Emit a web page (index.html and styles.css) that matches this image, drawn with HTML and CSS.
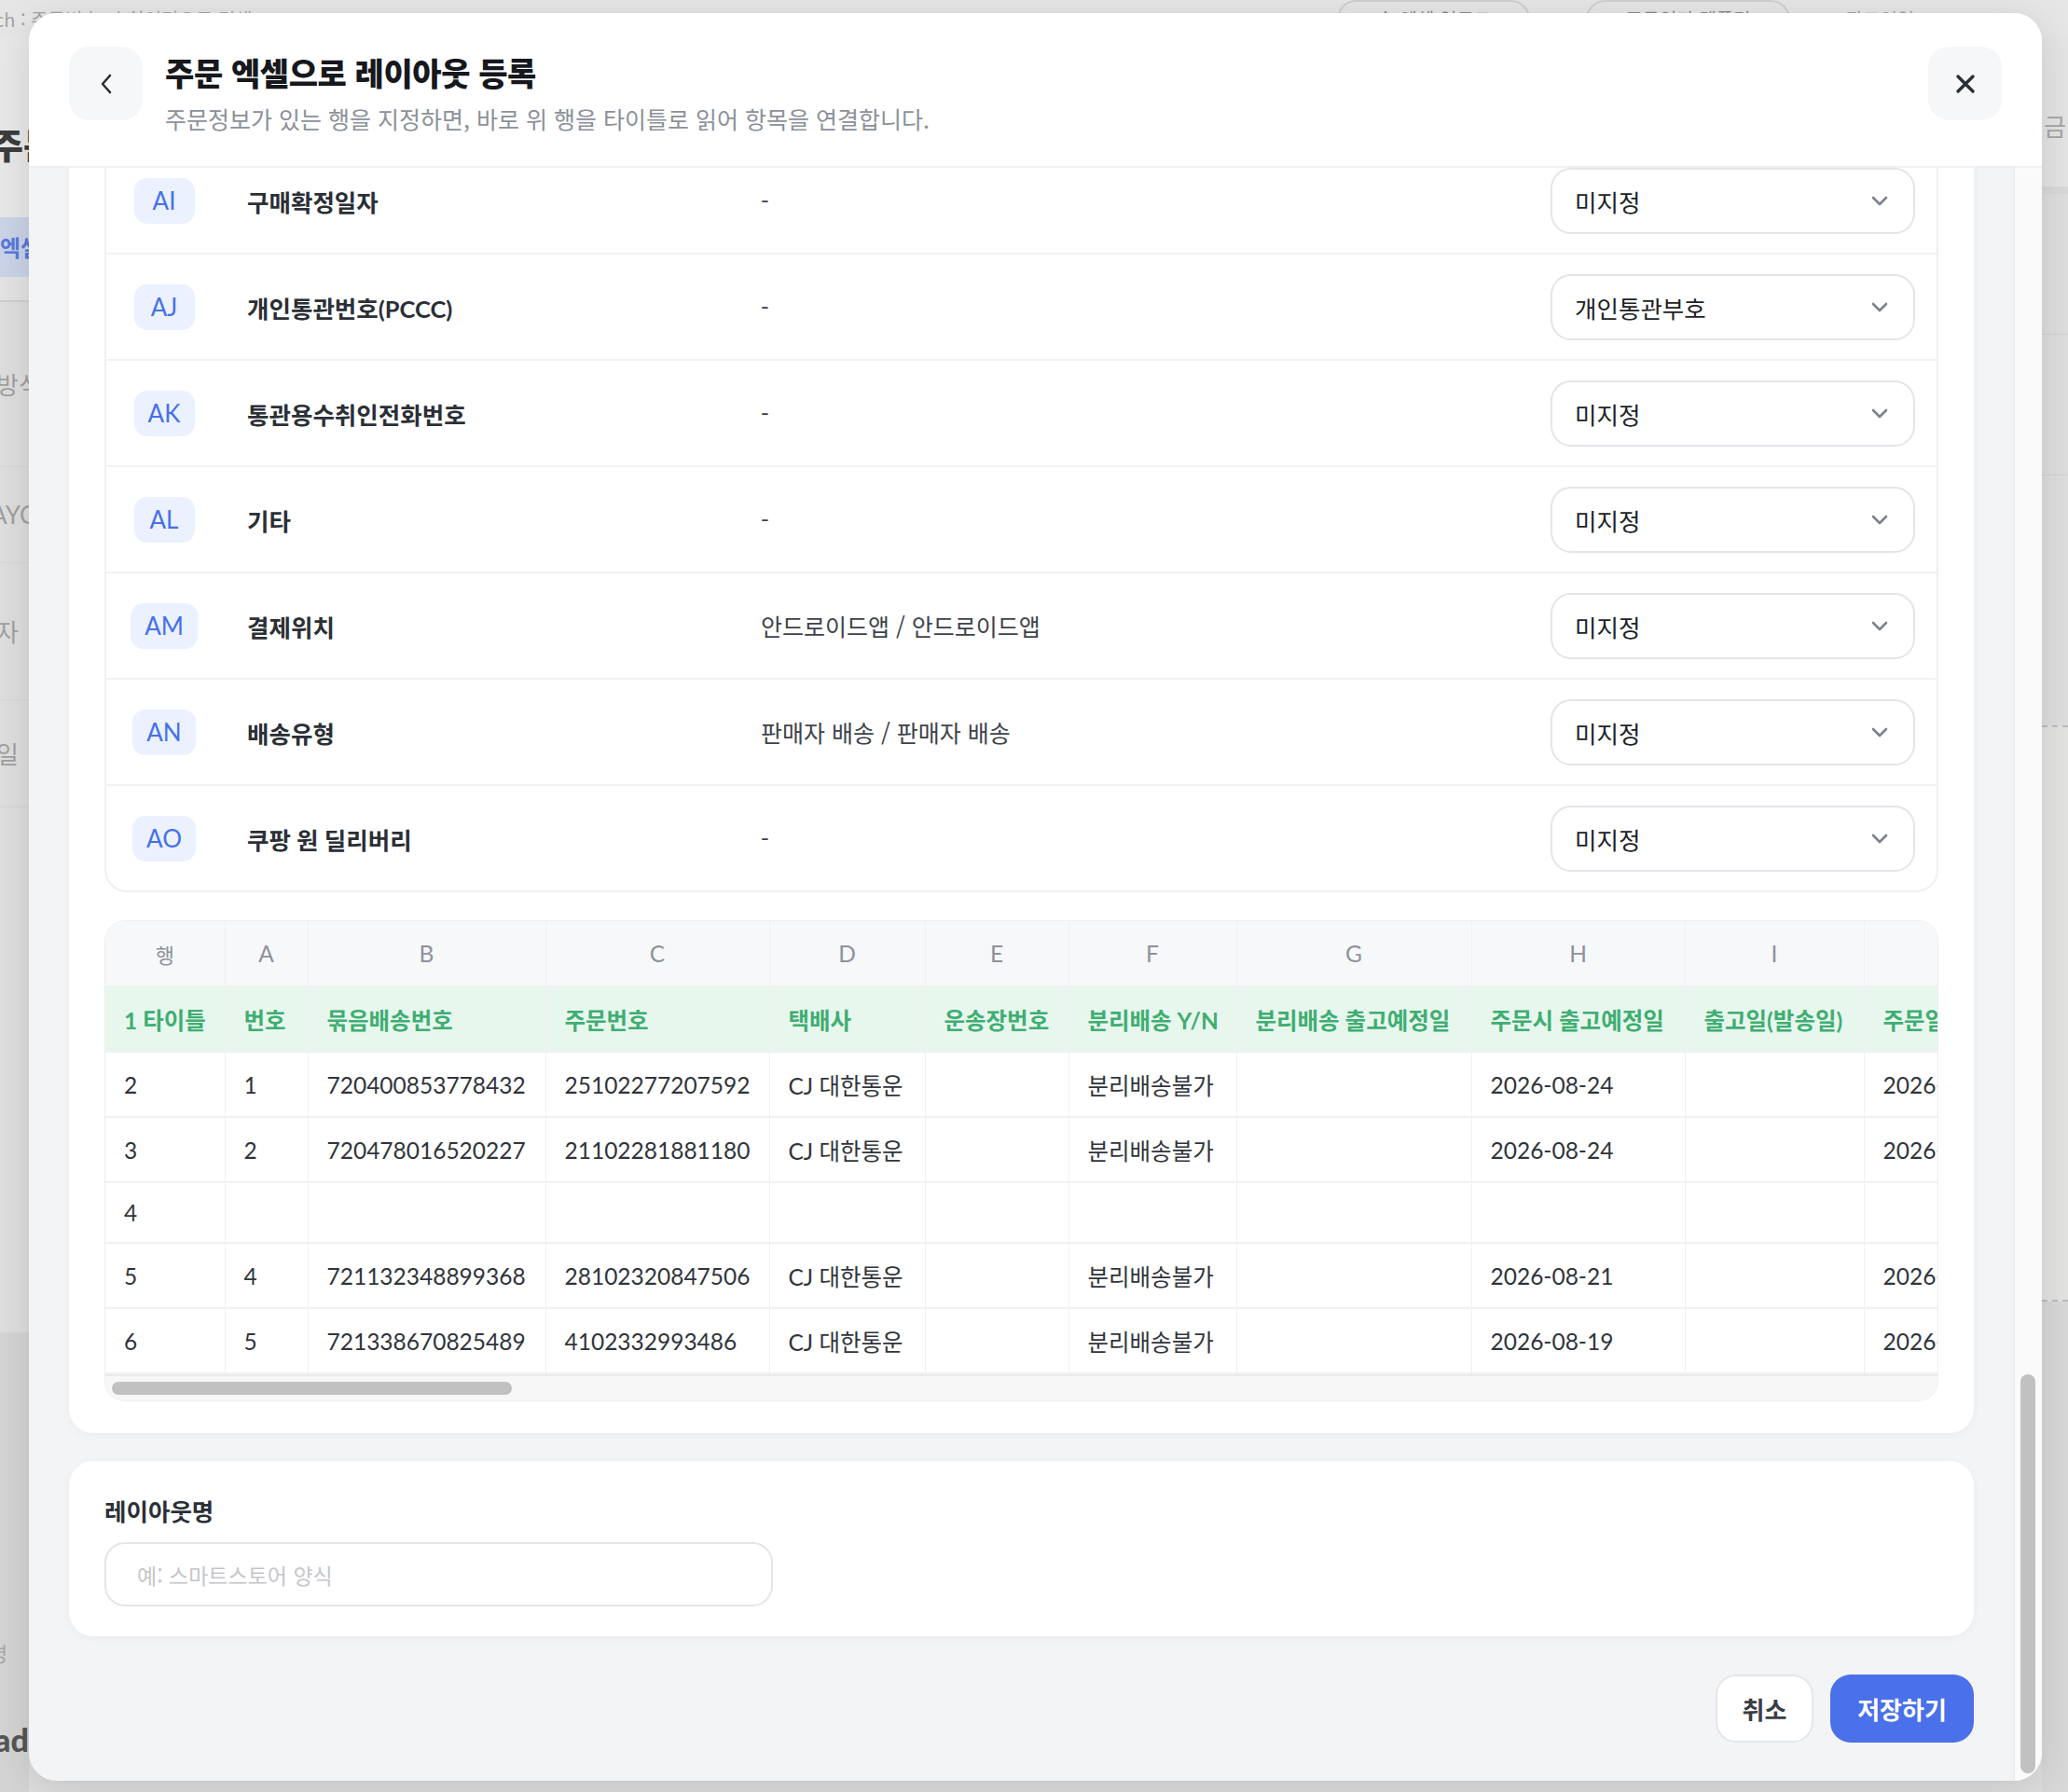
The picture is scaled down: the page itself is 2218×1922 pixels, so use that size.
FILE: index.html
```html
<!DOCTYPE html>
<html lang="ko">
<head>
  <meta charset="UTF-8">
  <meta name="viewport" content="width=device-width, initial-scale=1.0">
  <title>주문 엑셀으로 레이아웃 등록</title>
  <link rel="stylesheet" href="styles.css">
</head>
<body>
  <div class="page">
    <!-- dimmed page behind the dialog -->
    <div class="page-top">
      <span class="page-search">ch : 주문번호, 수취인명으로 검색</span>
      <span class="page-pill">↑ 엑셀 업로드</span>
      <span class="page-pill">주문일자 템플릿</span>
      <span class="page-link">광고인입</span>
    </div>
    <div class="page-body">
      <div class="page-left">
        <div class="pl-head">주문</div>
        <div class="pl-tab">엑셀</div>
        <div class="pl-sep"></div>
        <div class="pl-row r1">방식</div>
        <div class="pl-row r2">AYC</div>
        <div class="pl-row r3">자</div>
        <div class="pl-row r4">일</div>
        <div class="pl-fill"></div>
        <div class="pl-dark">
          <div class="pl-name">명</div>
          <div class="pl-brand">ad</div>
        </div>
      </div>
      <div class="page-right">
        <div class="pr-head">금</div>
        <div class="pr-row"></div>
        <div class="pr-row"></div>
        <div class="pr-dash"></div>
        <div class="pr-rest"></div>
      </div>
    </div>

    <div class="modal">
      <header class="modal-head">
        <button class="icon-btn" aria-label="뒤로">
          <svg width="14" height="24" viewBox="0 0 14 24"><path d="M11 3L3 12l8 9" fill="none" stroke="#2b2f36" stroke-width="2.6" stroke-linecap="round" stroke-linejoin="round"/></svg>
        </button>
        <div class="head-text">
          <h1>주문 엑셀으로 레이아웃 등록</h1>
          <p>주문정보가 있는 행을 지정하면, 바로 위 행을 타이틀로 읽어 항목을 연결합니다.</p>
        </div>
        <button class="icon-btn" aria-label="닫기">
          <svg width="22" height="22" viewBox="0 0 22 22"><path d="M3 3l16 16M19 3L3 19" fill="none" stroke="#2b2f36" stroke-width="3.4" stroke-linecap="round"/></svg>
        </button>
      </header>

      <div class="modal-body">
        <div class="scroll">
          <div class="scroll-inner">
            <section class="card">
              <div class="map-list">
                <div class="map-row">
                  <div class="map-col"><span class="col-badge">AG</span></div>
                  <div class="map-label">배송메시지</div>
                  <div class="map-value">-</div>
                  <div class="select">미지정<svg class="chev" width="18" height="11" viewBox="0 0 18 11"><path d="M2 2l7 7 7-7" fill="none" stroke="#7d828b" stroke-width="2.6" stroke-linecap="round" stroke-linejoin="round"/></svg></div>
                </div>
                <div class="map-row">
                  <div class="map-col"><span class="col-badge">AH</span></div>
                  <div class="map-label">결제일</div>
                  <div class="map-value">-</div>
                  <div class="select">미지정<svg class="chev" width="18" height="11" viewBox="0 0 18 11"><path d="M2 2l7 7 7-7" fill="none" stroke="#7d828b" stroke-width="2.6" stroke-linecap="round" stroke-linejoin="round"/></svg></div>
                </div>
                <div class="map-row">
                  <div class="map-col"><span class="col-badge">AI</span></div>
                  <div class="map-label">구매확정일자</div>
                  <div class="map-value">-</div>
                  <div class="select">미지정<svg class="chev" width="18" height="11" viewBox="0 0 18 11"><path d="M2 2l7 7 7-7" fill="none" stroke="#7d828b" stroke-width="2.6" stroke-linecap="round" stroke-linejoin="round"/></svg></div>
                </div>
                <div class="map-row">
                  <div class="map-col"><span class="col-badge">AJ</span></div>
                  <div class="map-label">개인통관번호(PCCC)</div>
                  <div class="map-value">-</div>
                  <div class="select">개인통관부호<svg class="chev" width="18" height="11" viewBox="0 0 18 11"><path d="M2 2l7 7 7-7" fill="none" stroke="#7d828b" stroke-width="2.6" stroke-linecap="round" stroke-linejoin="round"/></svg></div>
                </div>
                <div class="map-row">
                  <div class="map-col"><span class="col-badge">AK</span></div>
                  <div class="map-label">통관용수취인전화번호</div>
                  <div class="map-value">-</div>
                  <div class="select">미지정<svg class="chev" width="18" height="11" viewBox="0 0 18 11"><path d="M2 2l7 7 7-7" fill="none" stroke="#7d828b" stroke-width="2.6" stroke-linecap="round" stroke-linejoin="round"/></svg></div>
                </div>
                <div class="map-row">
                  <div class="map-col"><span class="col-badge">AL</span></div>
                  <div class="map-label">기타</div>
                  <div class="map-value">-</div>
                  <div class="select">미지정<svg class="chev" width="18" height="11" viewBox="0 0 18 11"><path d="M2 2l7 7 7-7" fill="none" stroke="#7d828b" stroke-width="2.6" stroke-linecap="round" stroke-linejoin="round"/></svg></div>
                </div>
                <div class="map-row">
                  <div class="map-col"><span class="col-badge">AM</span></div>
                  <div class="map-label">결제위치</div>
                  <div class="map-value">안드로이드앱 / 안드로이드앱</div>
                  <div class="select">미지정<svg class="chev" width="18" height="11" viewBox="0 0 18 11"><path d="M2 2l7 7 7-7" fill="none" stroke="#7d828b" stroke-width="2.6" stroke-linecap="round" stroke-linejoin="round"/></svg></div>
                </div>
                <div class="map-row">
                  <div class="map-col"><span class="col-badge">AN</span></div>
                  <div class="map-label">배송유형</div>
                  <div class="map-value">판매자 배송 / 판매자 배송</div>
                  <div class="select">미지정<svg class="chev" width="18" height="11" viewBox="0 0 18 11"><path d="M2 2l7 7 7-7" fill="none" stroke="#7d828b" stroke-width="2.6" stroke-linecap="round" stroke-linejoin="round"/></svg></div>
                </div>
                <div class="map-row">
                  <div class="map-col"><span class="col-badge">AO</span></div>
                  <div class="map-label">쿠팡 원 딜리버리</div>
                  <div class="map-value">-</div>
                  <div class="select">미지정<svg class="chev" width="18" height="11" viewBox="0 0 18 11"><path d="M2 2l7 7 7-7" fill="none" stroke="#7d828b" stroke-width="2.6" stroke-linecap="round" stroke-linejoin="round"/></svg></div>
                </div>
              </div>

              <!-- sheet preview -->
              <div class="sheet">
                <div class="sheet-scroll">
                  <table class="grid">
                    <colgroup>
                      <col style="width:128px"><col style="width:89px"><col style="width:255px"><col style="width:240px">
                      <col style="width:167px"><col style="width:154px"><col style="width:180px"><col style="width:252px">
                      <col style="width:229px"><col style="width:192px"><col style="width:220px"><col style="width:200px">
                    </colgroup>
                    <thead>
                      <tr class="letters">
                        <th>행</th><th>A</th><th>B</th><th>C</th><th>D</th><th>E</th><th>F</th><th>G</th><th>H</th><th>I</th><th>J</th><th>K</th>
                      </tr>
                    </thead>
                    <tbody>
                      <tr class="titles">
                        <td>1 타이틀</td><td>번호</td><td>묶음배송번호</td><td>주문번호</td><td>택배사</td><td>운송장번호</td><td>분리배송 Y/N</td><td>분리배송 출고예정일</td><td>주문시 출고예정일</td><td>출고일(발송일)</td><td>주문일시</td><td>결제일</td>
                      </tr>
                      <tr>
                        <td>2</td><td>1</td><td>720400853778432</td><td>25102277207592</td><td>CJ 대한통운</td><td></td><td>분리배송불가</td><td></td><td>2026-08-24</td><td></td><td>2026-08-17 10:21</td><td></td>
                      </tr>
                      <tr>
                        <td>3</td><td>2</td><td>720478016520227</td><td>21102281881180</td><td>CJ 대한통운</td><td></td><td>분리배송불가</td><td></td><td>2026-08-24</td><td></td><td>2026-08-17 11:05</td><td></td>
                      </tr>
                      <tr class="empty">
                        <td>4</td><td></td><td></td><td></td><td></td><td></td><td></td><td></td><td></td><td></td><td></td><td></td>
                      </tr>
                      <tr>
                        <td>5</td><td>4</td><td>721132348899368</td><td>28102320847506</td><td>CJ 대한통운</td><td></td><td>분리배송불가</td><td></td><td>2026-08-21</td><td></td><td>2026-08-14 09:40</td><td></td>
                      </tr>
                      <tr>
                        <td>6</td><td>5</td><td>721338670825489</td><td>4102332993486</td><td>CJ 대한통운</td><td></td><td>분리배송불가</td><td></td><td>2026-08-19</td><td></td><td>2026-08-12 16:32</td><td></td>
                      </tr>
                    </tbody>
                  </table>
                </div>
                <div class="hbar"><span class="hbar-thumb"></span></div>
              </div>
            </section>

            <section class="card name-card">
              <label class="field-label" for="layoutName">레이아웃명</label>
              <input id="layoutName" class="text-input" type="text" placeholder="예: 스마트스토어 양식">
            </section>

            <div class="actions">
              <button class="btn btn-cancel">취소</button>
              <button class="btn btn-save">저장하기</button>
            </div>
          </div>
        </div>
        <div class="vbar"><span class="vbar-thumb"></span></div>
      </div>
    </div>
  </div>
</body>
</html>
```

FILE: styles.css
```css
/* Order excel layout dialog */
body {
  margin: 0;
  font-family: "Lato", "Noto Sans CJK KR", sans-serif;
  color: #2b2f36;
}

.page {
  position: relative;
  width: 2218px;
  height: 1922px;
  overflow: hidden;
  background: #dedede;
}

/* ---------- dimmed background page ---------- */
.page-top {
  height: 40px;
  display: flex;
  align-items: center;
  gap: 60px;
  background: #e6e6e6;
  font-family: "Noto Sans CJK KR", sans-serif;
  font-size: 20px;
  color: #a3a3a3;
  white-space: nowrap;
}

.page-search {
  margin-left: -6px;
  width: 1380px;
}

.page-pill {
  padding: 4px 40px;
  border: 2px solid #cfcfcf;
  border-radius: 30px;
  color: #8a8a8a;
}

.page-body {
  height: 1882px;
  display: flex;
  justify-content: space-between;
}

.page-left {
  width: 31px;
  overflow: hidden;
  white-space: nowrap;
  display: flex;
  flex-direction: column;
  font-family: "Noto Sans CJK KR", sans-serif;
}

.pl-head {
  height: 193px;
  box-sizing: border-box;
  padding-top: 92px;
  line-height: 44px;
  font-size: 38px;
  font-weight: 900;
  color: #3c3c3c;
  margin-left: -10px;
  background: #e8e8e8;
}

.pl-tab {
  height: 64px;
  line-height: 64px;
  background: #cbd3e8;
  color: #5679df;
  font-size: 24px;
  font-weight: 700;
  margin-left: -4px;
  padding-left: 4px;
}

.pl-sep {
  height: 25px;
  background: #e3e3e3;
  border-bottom: 2px solid #d0d0d0;
}

.pl-row {
  font-size: 26px;
  color: #a0a0a0;
  border-bottom: 1px solid #d6d6d6;
  margin-left: -4px;
}

.pl-row.r1 { height: 176px; line-height: 176px; }
.pl-row.r2 { height: 102px; line-height: 102px; font-family: "Lato", sans-serif; margin-left: -10px; }
.pl-row.r3 { height: 146px; line-height: 146px; }
.pl-row.r4 { height: 114px; line-height: 114px; }

.pl-fill {
  flex: 1;
}

.pl-dark {
  height: 493px;
  background: #d4d4d4;
  display: flex;
  flex-direction: column;
  justify-content: flex-end;
  padding-bottom: 36px;
  box-sizing: border-box;
}

.pl-name {
  font-size: 22px;
  color: #a8a8a8;
  margin-left: -12px;
  line-height: 40px;
  margin-bottom: 54px;
}

.pl-brand {
  font-family: "Lato", sans-serif;
  font-size: 34px;
  font-weight: 900;
  color: #555;
  margin-left: -6px;
  line-height: 40px;
}

.page-right {
  width: 28px;
  overflow: hidden;
  display: flex;
  flex-direction: column;
  font-family: "Noto Sans CJK KR", sans-serif;
}

.pr-head {
  height: 160px;
  line-height: 190px;
  font-size: 26px;
  color: #a5a5a5;
  padding-left: 2px;
  background: #e4e4e4;
  border-bottom: 8px solid #d9d9d9;
}

.pr-row {
  height: 150px;
  border-bottom: 1px solid #d2d2d2;
}

.pr-dash {
  height: 614px;
  background: #e3e4e2;
  border-top: 2px dashed #bdbdbd;
  border-bottom: 2px dashed #bdbdbd;
  margin-top: 268px;
}

.pr-rest {
  flex: 1;
  background: #d8d8d8;
}

/* ---------- dialog ---------- */
.modal {
  position: absolute;
  left: 31px;
  top: 14px;
  width: 2159px;
  height: 1896px;
  border-radius: 30px;
  background: #f3f4f6;
  overflow: hidden;
  display: flex;
  flex-direction: column;
  box-shadow: 0 8px 40px rgba(0, 0, 0, 0.12);
}

.modal-head {
  flex: none;
  height: 166px;
  box-sizing: border-box;
  background: #fff;
  border-bottom: 2px solid #eef0f2;
  display: flex;
  align-items: flex-start;
  padding: 36px 43px 0;
}

.icon-btn {
  flex: none;
  width: 79px;
  height: 79px;
  padding: 0;
  border: none;
  border-radius: 22px;
  background: #f6f7f9;
  display: flex;
  align-items: center;
  justify-content: center;
  cursor: pointer;
}

.head-text {
  flex: 1;
  margin-left: 24px;
  padding-top: 6px;
}

.head-text h1 {
  margin: 0;
  font-family: "Noto Sans CJK KR", sans-serif;
  font-size: 34px;
  font-weight: 900;
  line-height: 44px;
  letter-spacing: -0.4px;
  color: #16181d;
}

.head-text p {
  margin: 11px 0 0;
  font-family: "Noto Sans CJK KR", sans-serif;
  font-size: 25px;
  line-height: 32px;
  color: #8b9099;
}

.modal-body {
  flex: 1;
  min-height: 0;
  display: flex;
}

/* content is shown scrolled to the bottom */
.scroll {
  flex: 1;
  min-width: 0;
  overflow: hidden;
  display: flex;
  flex-direction: column;
  justify-content: flex-end;
}

.scroll-inner {
  flex: none;
  padding: 0 42px 0 43px;
}

.vbar {
  flex: none;
  width: 29px;
  background: #fafafa;
  border-left: 2px solid #ececec;
  display: flex;
  flex-direction: column;
  justify-content: flex-end;
}

.vbar-thumb {
  width: 16px;
  height: 428px;
  margin: 0 0 8px 6px;
  border-radius: 8px;
  background: #c1c1c1;
}

.card {
  background: #fff;
  border-radius: 26px;
  padding: 38px 38px 34px;
  box-shadow: 0 2px 10px rgba(0, 0, 0, 0.04);
}

/* ---------- column mapping list ---------- */
.map-list {
  border: 2px solid #eef0f2;
  border-radius: 24px;
  margin-bottom: 30px;
  overflow: hidden;
}

.map-row {
  display: grid;
  grid-template-columns: 88px 596px 1fr 391px;
  align-items: center;
  height: 112px;
  padding: 0 23px 0 18px;
  border-bottom: 2px solid #f1f2f4;
}

.map-row:last-child {
  border-bottom: none;
}

.map-col {
  display: flex;
  justify-content: center;
}

.col-badge {
  min-width: 65px;
  height: 49px;
  box-sizing: border-box;
  padding: 0 15px;
  border-radius: 14px;
  background: #ebf1fe;
  color: #4670ea;
  font-size: 26px;
  display: flex;
  align-items: center;
  justify-content: center;
}

.map-label {
  padding-left: 45px;
  font-size: 25.5px;
  font-weight: 700;
  color: #2b2f36;
}

.map-value {
  font-family: "Noto Sans CJK KR", sans-serif;
  font-size: 25px;
  color: #3d424a;
}

.select {
  height: 71px;
  box-sizing: border-box;
  border: 2px solid #e3e5e9;
  border-radius: 22px;
  padding: 0 27px 0 24px;
  display: flex;
  align-items: center;
  justify-content: space-between;
  font-family: "Noto Sans CJK KR", sans-serif;
  font-size: 25.5px;
  color: #202226;
  background: #fff;
}

/* ---------- sheet preview ---------- */
.sheet {
  border: 1px solid #eceef1;
  border-radius: 22px;
  overflow: hidden;
}

.sheet-scroll {
  overflow: hidden;
}

.grid {
  border-collapse: collapse;
  table-layout: fixed;
  width: 2306px;
  font-size: 24.5px;
}

.grid th,
.grid td {
  border-right: 1px solid #eff0f2;
  border-bottom: 2px solid #f0f1f3;
  white-space: nowrap;
  overflow: hidden;
  text-align: left;
  padding: 0 0 0 20px;
  color: #30343b;
}

.letters th {
  height: 69px;
  background: #f7f8fa;
  text-align: center;
  padding: 0;
  font-weight: 400;
  color: #8d929b;
}

.letters th:first-child {
  font-family: "Noto Sans CJK KR", sans-serif;
  font-size: 22px;
}

.titles td {
  height: 68px;
  background: #e8f7ee;
  color: #3fae72;
  font-weight: 700;
}

.grid tbody tr td {
  height: 68px;
}

.grid tbody tr.empty td {
  height: 63px;
}

.hbar {
  height: 26px;
  background: #f7f7f7;
  border-top: 2px solid #ebebeb;
}

.hbar-thumb {
  display: block;
  width: 429px;
  height: 14px;
  margin: 6px 0 0 7px;
  border-radius: 7px;
  background: #c1c1c1;
}

/* ---------- layout name ---------- */
.name-card {
  margin-top: 30px;
  padding: 38px 38px 32px;
}

.field-label {
  display: block;
  font-family: "Noto Sans CJK KR", sans-serif;
  font-size: 25.5px;
  font-weight: 700;
  line-height: 30px;
  color: #2b2f36;
}

.text-input {
  display: block;
  margin-top: 19px;
  width: 717px;
  height: 69px;
  box-sizing: border-box;
  border: 2px solid #e3e5e9;
  border-radius: 22px;
  padding: 0 33px;
  font-family: "Noto Sans CJK KR", sans-serif;
  font-size: 23px;
  outline: none;
}

.text-input::placeholder {
  color: #c4c6cb;
}

/* ---------- footer buttons ---------- */
.actions {
  display: flex;
  justify-content: flex-end;
  gap: 18px;
  padding: 41px 0;
}

.btn {
  height: 73px;
  border-radius: 22px;
  font-family: "Noto Sans CJK KR", sans-serif;
  font-size: 26px;
  font-weight: 700;
  cursor: pointer;
}

.btn-cancel {
  width: 105px;
  background: #fff;
  border: 2px solid #e4e6ea;
  color: #393d45;
}

.btn-save {
  width: 154px;
  background: #4a70ea;
  border: none;
  color: #fff;
}
```
